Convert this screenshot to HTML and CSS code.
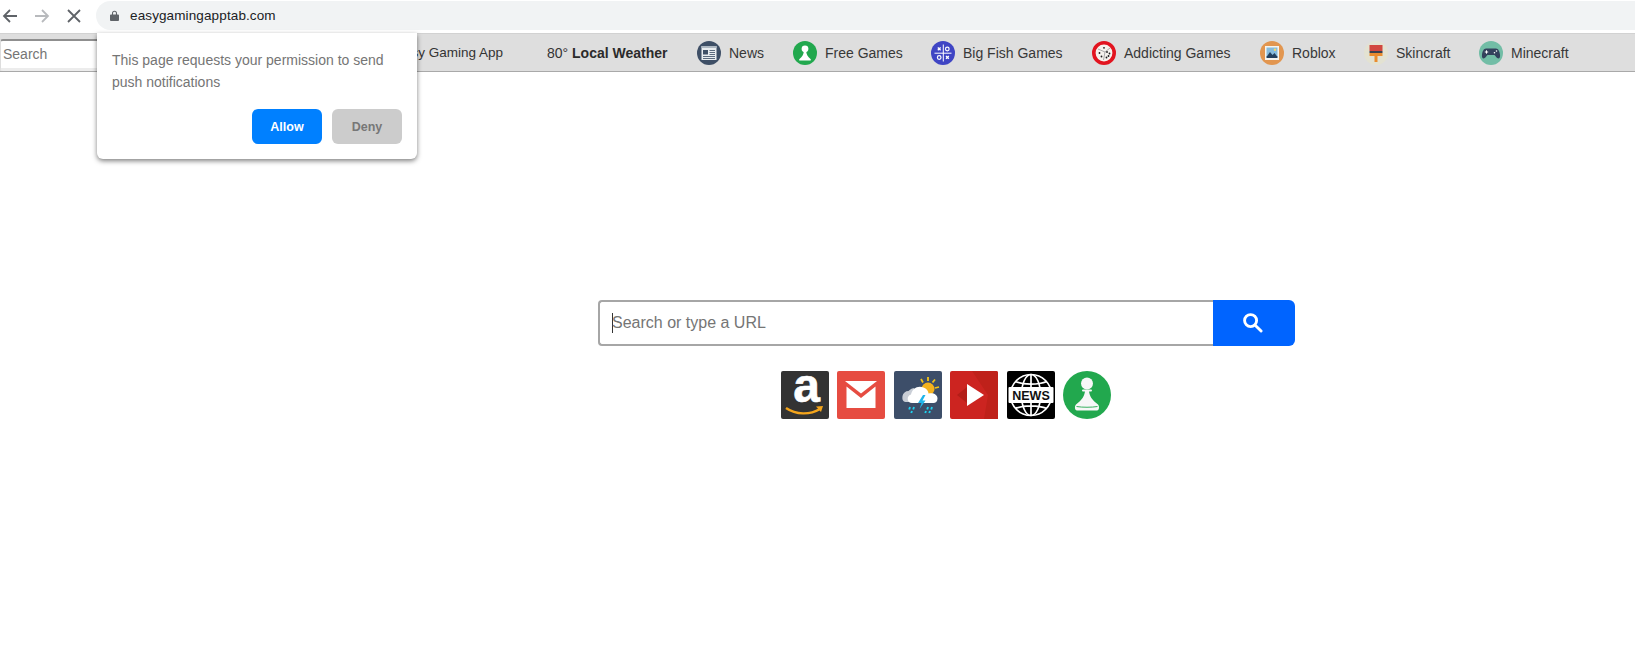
FILE: index.html
```html
<!DOCTYPE html>
<html lang="en">
<head>
<meta charset="utf-8">
<title>easygamingapptab.com</title>
<link rel="stylesheet" href="styles.css">
</head>
<body>
<header class="chrome">
  <svg class="nav back" viewBox="0 0 16 16"><path d="M15 8H2M8 2 2 8l6 6"/></svg>
  <svg class="nav fwd" viewBox="0 0 16 16"><path d="M1 8h13M8 2l6 6-6 6"/></svg>
  <svg class="nav stop" viewBox="0 0 16 16"><path d="M2 2l12 12M14 2 2 14"/></svg>
  <div class="omnibox">
    <svg class="lock" viewBox="0 0 10 12"><path d="M2.200 5V3.400a2.800 2.800 0 0 1 5.600 0V5H9a1 1 0 0 1 1 1v5a1 1 0 0 1-1 1H1a1 1 0 0 1-1-1V6a1 1 0 0 1 1-1zm1.200 0h3.200V3.400a1.600 1.600 0 0 0-3.200 0z"/></svg>
    <span class="url">easygamingapptab.com</span>
  </div>
</header>
<nav class="toolbar">
  <div class="tb-search">Search</div>
  <span class="app">Easy Gaming App</span>
  <span class="weather">80° <b>Local Weather</b></span>
  <a class="link l-news">
    <svg class="ico" viewBox="0 0 24 24"><circle cx="12" cy="12" r="12" fill="#3e4f66"/><rect x="4.500" y="5" width="15" height="14" fill="#e9edf0"/><rect x="4.500" y="5" width="15" height="2" fill="#aeb8c2"/><rect x="6" y="9" width="5" height="4.500" fill="#3e4f66"/><path d="M12.500 9.500h5.500M12.500 11.500h5.500M12.500 13.500h5.500M6 15.500h12M6 17.500h12" stroke="#5c6b7e" stroke-width="1"/></svg>News</a>
  <a class="link l-free">
    <svg class="ico" viewBox="0 0 24 24"><circle cx="12" cy="12" r="12" fill="#22a84e"/><circle cx="12" cy="7.800" r="3.400" fill="#fff"/><path d="M10.800 10.500h2.400c.2 3 1.500 5.200 4.300 7.400.6.500.5 1.600-.4 1.600H6.900c-.9 0-1-1.100-.4-1.600 2.800-2.200 4.100-4.400 4.300-7.400z" fill="#fff"/></svg>Free Games</a>
  <a class="link l-fish">
    <svg class="ico" viewBox="0 0 24 24"><circle cx="12" cy="12" r="12" fill="#3f45c4"/><path d="M12.300 3.500v17M3.500 12.200h17" stroke="#fff" stroke-width="1"/><path d="M6.800 6.500l2.800 2.800M9.600 6.500 6.800 9.300M15 15l2.800 2.800M17.800 15 15 17.800" stroke="#fff" stroke-width="1.300"/><circle cx="16.300" cy="8" r="1.800" fill="none" stroke="#fff" stroke-width="1.200"/><circle cx="8.200" cy="16.500" r="1.800" fill="none" stroke="#fff" stroke-width="1.200"/></svg>Big Fish Games</a>
  <a class="link l-add">
    <svg class="ico" viewBox="0 0 24 24"><circle cx="12" cy="12" r="10.200" fill="#f6f3ee" stroke="#e2141f" stroke-width="3.600"/><path d="M13 11 6 8M13 11l5-4M13 11l-1.500 8" stroke="#8c8c8c" stroke-width=".7"/><g fill="#1d1d1d"><circle cx="12" cy="6.800" r=".9"/><circle cx="7.500" cy="12" r=".9"/><circle cx="9.500" cy="15.500" r=".9"/><circle cx="15" cy="11" r=".9"/><circle cx="17.500" cy="12.500" r=".9"/><circle cx="14.500" cy="16.500" r=".9"/><circle cx="16.500" cy="15" r=".9"/></g></svg>Addicting Games</a>
  <a class="link l-rob">
    <svg class="ico" viewBox="0 0 24 24"><circle cx="12" cy="12" r="12" fill="#e29650"/><rect x="5" y="5" width="14" height="14" fill="#f6f4ef"/><rect x="6.500" y="6.500" width="11" height="9.500" fill="#86bbdd"/><path d="M6.500 16l3.500-5 2.500 3 2-2 3 4z" fill="#24405e"/><rect x="6.500" y="15.500" width="11" height="1.500" fill="#24405e"/><circle cx="15" cy="8.800" r="1.200" fill="#f5d76e"/></svg>Roblox</a>
  <a class="link l-skin">
    <svg class="ico" viewBox="0 0 24 24"><circle cx="12" cy="12" r="12" fill="#e3e2d2"/><rect x="5.500" y="4" width="13" height="6" fill="#d2473f"/><rect x="5.500" y="10" width="13" height="2" fill="#3c4150"/><rect x="5.500" y="12" width="13" height="3" fill="#ea8c2f"/><rect x="10.500" y="15" width="3" height="6" fill="#ea8c2f"/></svg>Skincraft</a>
  <a class="link l-mine">
    <svg class="ico" viewBox="0 0 24 24"><circle cx="12" cy="12" r="12" fill="#72bda6"/><path d="M7 7.500h10c2.300 0 3.600 3 4 6 .3 2.500-.3 4-1.700 4-1.500 0-2.500-2.500-3.800-3.500h-7c-1.300 1-2.300 3.500-3.800 3.500-1.400 0-2-1.500-1.700-4 .4-3 1.700-6 4-6z" fill="#33415c"/><path d="M5.800 11h3.400M7.500 9.300v3.400" stroke="#fff" stroke-width="1"/><circle cx="15.500" cy="11.800" r=".8" fill="#fff"/><circle cx="17.500" cy="10" r=".8" fill="#fff"/></svg>Minecraft</a>
</nav>
<main class="page">
  <form class="search">
    <div class="search-input"><span class="caret"></span><span class="ph">Search or type a URL</span></div>
    <div class="search-btn">
      <svg viewBox="0 0 22 22"><circle cx="9" cy="9" r="6.300"/><path d="M13.800 13.800 20 20"/></svg>
    </div>
  </form>
  <div class="tiles">
    <svg class="tile tile-amz" viewBox="0 0 48 48"><rect width="48" height="48" rx="2" fill="#333"/><text x="25.500" y="31" class="amz">a</text><path d="M5 37c10 7 24 7 34 1" fill="none" stroke="#f4a51c" stroke-width="2.400"/><path d="M35 35.500l7-.5-2 6z" fill="#f4a51c"/></svg>
    <svg class="tile" viewBox="0 0 48 48"><rect width="48" height="48" rx="2" fill="#e64c41"/><path d="M8 10h32L24 22.500z" fill="#fff"/><path d="M9.500 15.500 24 27l14.500-11.500V37h-29z" fill="#fff"/></svg>
    <svg class="tile" viewBox="0 0 48 48"><rect width="48" height="48" rx="2" fill="#3d4e69"/><circle cx="34" cy="18" r="6.500" fill="#f5b21c"/><path d="M27 8l2 3.500M34 6v4M41 8.500l-2.500 3M45 16l-4 1" stroke="#f5c518" stroke-width="1.800"/><path d="M13 31c-4 0-5-2-4.500-6 .5-3 3-5 6-5 2-2 4-3 6-3l-3 14z" fill="#c9ced6"/><path d="M18 32c-5 0-6-7-1-8.500 1-6 7-9.500 12.500-7 3 1 5 3.500 5 6 5-1 9 1 9 5 0 3-2 4.500-4 4.500z" fill="#fff"/><path d="M29 24l-5 8h3.500l-2 6 6-8.500h-3l3-5.500z" fill="#1fb5ea"/><path d="M16 36l-.8 2.500M20 36l-.8 2.500M34 36l-.8 2.500M38 36l-.8 2.500M18 40l-.8 2M32 40l-.8 2M36 40l-.8 2" stroke="#1fd0ee" stroke-width="1.900"/></svg>
    <svg class="tile" viewBox="0 0 48 48"><rect width="48" height="48" rx="2" fill="#cc2420"/><path d="M22 0h24a2 2 0 0 1 2 2v46H34l4-24z" fill="#bf211a"/><path d="M7 24l10-8v16z" fill="#b31e18"/><path d="M17 13l17 11-17 11z" fill="#fff"/></svg>
    <svg class="tile" viewBox="0 0 48 48"><rect width="48" height="48" rx="2" fill="#000"/><g fill="none" stroke="#fff" stroke-width="1.700"><circle cx="24" cy="24" r="20.500"/><ellipse cx="24" cy="24" rx="9.500" ry="20.500"/><path d="M24 3.500V16M24 32v12.500M8 10.500c9 3.500 23 3.500 32 0M8 37.500c9-3.500 23-3.500 32 0"/></g><rect x="1.500" y="16" width="45" height="16" rx="1" fill="#fff"/><text x="24" y="28.500" class="nw">NEWS</text></svg>
    <svg class="tile" viewBox="0 0 48 48"><circle cx="24" cy="24" r="24" fill="#22a84e"/><circle cx="24" cy="12.500" r="6" fill="#f7f7f7"/><rect x="19" y="18.500" width="10" height="2" rx="1" fill="#f7f7f7"/><path d="M22 20h4c.4 5 3 9 9 13.500 1.500 1.500 1.500 6-1 6H14c-2.500 0-2.500-4.500-1-6 6-4.500 8.600-8.500 9-13.500z" fill="#f7f7f7"/><path d="M13.500 35.500c6 1 15 1 21 0" fill="none" stroke="#22a84e" stroke-width=".9"/></svg>
  </div>
</main>
<aside class="prompt">
  <p class="prompt-text">This page requests your permission to send push notifications</p>
  <div class="prompt-actions">
    <button class="btn allow" type="button">Allow</button>
    <button class="btn deny" type="button">Deny</button>
  </div>
</aside>
</body>
</html>
```
FILE: styles.css
```css
* { box-sizing: border-box; }
html, body { margin: 0; height: 100%; }
body { background: #fff; font-family: "Liberation Sans", Arial, sans-serif; overflow: hidden; position: relative; }

.chrome { height: 33px; display: flex; align-items: flex-start; padding-left: 2px; background: #fff; }
.nav { width: 16px; height: 16px; margin-top: 8px; fill: none; stroke-width: 1.800; flex: none; }
.back { stroke: #5f6368; }
.fwd { stroke: #b8babd; margin-left: 16px; }
.stop { stroke: #5f6368; margin-left: 16px; }
.omnibox { flex: 1; height: 29px; margin: 1px 0 0 14px; background: #f1f3f4; border-radius: 15px 0 0 15px; display: flex; align-items: center; padding-left: 14px; }
.lock { width: 9px; height: 11px; fill: #5f6368; margin-bottom: 1px; }
.url { margin-left: 11px; font-size: 13.500px; color: #202124; letter-spacing: .12px; }

.toolbar { height: 39px; background: #dedede; border-top: 1px solid #d2d2d2; border-bottom: 1px solid #a9a9a9; display: flex; align-items: center; font-size: 14px; color: #333; position: relative; }
.tb-search { position: absolute; left: 0; top: 5px; width: 200px; height: 32px; background: #fff; border: 1px solid #ddd; border-top: 2px solid #8f8f8f; border-bottom: 3px solid #ececec; border-radius: 3px; padding: 5px 0 0 2px; font-size: 14px; color: #757575; }
.app { margin-left: 395px; width: 152px; font-size: 13.500px; color: #333; }
.weather { width: 150px; font-size: 14px; white-space: nowrap; color: #333; }
.weather b { color: #2b2b2b; }
.link { display: flex; align-items: center; color: #383838; white-space: nowrap; }
.ico { width: 24px; height: 24px; margin-right: 8px; flex: none; }
.l-news { width: 96px; }
.l-free { width: 138px; }
.l-fish { width: 161px; }
.l-add { width: 168px; }
.l-rob { width: 104px; }
.l-skin { width: 115px; }

.page { position: relative; padding: 228px 0 0 598px; }
.search { display: flex; width: 697px; height: 46px; }
.search-input { width: 615px; height: 46px; background: #fff; border: 2px solid #a6a6a6; border-right: 0; border-radius: 4px 0 0 4px; display: flex; align-items: center; padding-left: 12px; font-size: 16px; color: #757575; }
.caret { width: 1px; height: 20px; background: #333; flex: none; }
.ph { margin-left: -1px; }
.search-btn { width: 82px; height: 46px; background: #0064ff; border-radius: 0 6px 6px 0; display: flex; align-items: center; justify-content: center; }
.search-btn svg { width: 21px; height: 21px; fill: none; stroke: #fff; stroke-width: 3; stroke-linecap: round; margin-right: 4px; margin-bottom: 2px; }

.tiles { display: flex; gap: 8.400px; margin: 25px 0 0 183px; }
.tile { width: 48px; height: 48px; flex: none; }
.tile-amz { overflow: visible; }
.amz { font: bold 48px "Liberation Sans", Arial, sans-serif; fill: #fff; stroke: #fff; stroke-width: .6px; text-anchor: middle; }
.nw { font: bold 12.500px "Liberation Sans", Arial, sans-serif; fill: #111; text-anchor: middle; }

.prompt { position: absolute; left: 97px; top: 33px; width: 320px; height: 126px; background: #fff; border-radius: 0 0 6px 6px; box-shadow: 0 2px 5px rgba(0,0,0,.5); padding: 16px 15px 0 15px; }
.prompt-text { margin: 0; font-size: 14px; line-height: 22px; color: #757575; }
.prompt-actions { display: flex; justify-content: flex-end; gap: 10px; margin-top: 16px; }
.btn { width: 70px; height: 35px; border: 0; border-radius: 6px; font: bold 12.500px "Liberation Sans", Arial, sans-serif; }
.allow { background: #0080ff; color: #fff; }
.deny { background: #ccc; color: #777; }
```
